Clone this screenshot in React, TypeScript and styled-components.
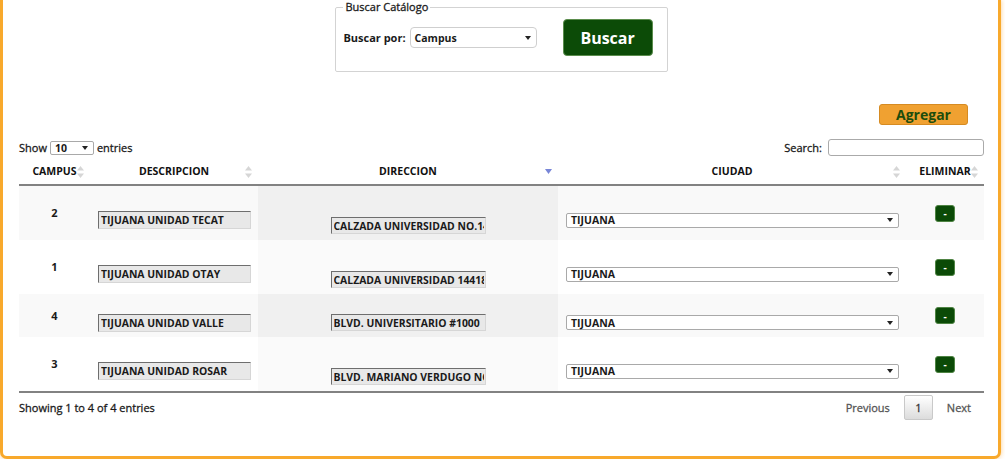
import React from "react";
import styled, { createGlobalStyle } from "styled-components";

const GlobalStyle = createGlobalStyle`
  html, body { margin: 0; padding: 0; background: #fff; }
  body { font-family: "Open Sans", "DejaVu Sans", sans-serif; color: #1a1a1a; }
  * { box-sizing: border-box; }
`;

const Frame = styled.div`
  width: 1001px;
  height: 459px;
  border: 3px solid #f8a92c;
  border-top: 0;
  border-radius: 0 0 7px 7px;
  box-shadow: 0 0 5px rgba(246, 163, 45, 0.55);
  background: #fff;
  padding: 0 14px 0 16px;
  display: flex;
  flex-direction: column;
`;

const SearchBox = styled.fieldset`
  align-self: center;
  margin: 0;
  padding: 5px 14px 15px 7px;
  border: 1px solid #d3d3d3;
  border-radius: 2px;
  display: flex;
  align-items: center;
  min-width: 0;
`;

const Legend = styled.legend`
  font-size: 11px;
  line-height: 14px;
  font-weight: 400;
  -webkit-text-stroke: 0.3px #1a1a1a;
  color: #1a1a1a;
  padding: 0 2px;
`;

const Label = styled.span<{ $bold?: boolean }>`
  font-size: 11px;
  line-height: 14px;
  font-weight: ${(p) => (p.$bold ? 700 : 400)};
  -webkit-text-stroke: ${(p) => (p.$bold ? "0" : "0.3px")} #1a1a1a;
  color: #1a1a1a;
  white-space: nowrap;
`;

const FakeSelect = styled.div<{ $w: number; $h: number; $radius?: number; $ml?: number }>`
  width: ${(p) => p.$w}px;
  height: ${(p) => p.$h}px;
  margin-left: ${(p) => p.$ml ?? 0}px;
  border: 1px solid ${(p) => ((p.$radius ?? 2) > 2 ? "#cfcfcf" : "#a9a9a9")};
  border-radius: ${(p) => p.$radius ?? 2}px;
  background: #fff;
  display: flex;
  align-items: center;
  justify-content: space-between;
  padding: 0 5px 0 4px;
  font-size: 10.5px;
  font-weight: 700;
  color: #1a1a1a;
  line-height: 12px;
`;

const CenteredSelect = styled(FakeSelect)`
  margin: 0 auto;
`;

const SearchButton = styled.button`
  width: 90px;
  height: 37px;
  margin-left: 26px;
  background: #0c4b07;
  border: 1px solid #5b8d4d;
  border-radius: 4px;
  color: #fff;
  font-family: "Open Sans", "DejaVu Sans", sans-serif;
  font-size: 16px;
  font-weight: 700;
  padding: 0;
`;

const AddButton = styled.button`
  align-self: flex-end;
  margin: 32px 16px 0 0;
  width: 89px;
  height: 21px;
  background: #f0a131;
  border: 1px solid #d68b22;
  border-radius: 3px;
  color: #1d4d0c;
  font-family: "Open Sans", "DejaVu Sans", sans-serif;
  font-size: 14px;
  font-weight: 700;
  line-height: 18px;
  padding: 0;
`;

const Toolbar = styled.div`
  margin-top: 14px;
  height: 17px;
  display: flex;
  align-items: center;
  justify-content: space-between;
`;

const Group = styled.div`
  display: flex;
  align-items: center;
`;

const Gap = styled.span<{ $w: number }>`
  width: ${(p) => p.$w}px;
  flex: none;
`;

const SearchInput = styled.input`
  width: 156px;
  height: 17px;
  margin-left: 6px;
  border: 1px solid #aaa;
  border-radius: 3px;
  background: #fff;
  padding: 0 3px;
`;

const Table = styled.table`
  margin-top: 5px;
  width: 965px;
  table-layout: fixed;
  border-collapse: separate;
  border-spacing: 0;
  border-bottom: 2px solid #828282;
`;

const HeadCell = styled.th`
  height: 25px;
  padding: 4px 6px 6px;
  border-bottom: 2px solid #828282;
  font-size: 10.5px;
  line-height: 13px;
  font-weight: 700;
  color: #111;
  text-align: center;
`;

const HeadInner = styled.div`
  display: grid;
  grid-template-columns: 1fr auto 1fr;
  align-items: center;
`;

const HeadTitle = styled.span`
  grid-column: 2;
`;

const IconSlot = styled.span`
  grid-column: 3;
  justify-self: end;
  display: flex;
  align-items: center;
`;

const Row = styled.tr<{ $odd: boolean }>`
  background: ${(p) => (p.$odd ? "#f9f9f9" : "#fff")};
  & + & > td { border-top: 1px solid #dddddd; }
`;

const Cell = styled.td<{ $shift?: boolean; $sorted?: boolean; $odd?: boolean }>`
  padding: ${(p) => (p.$shift ? "14px 8px 0" : "6px 8px")};
  text-align: center;
  vertical-align: middle;
  font-size: 11px;
  line-height: 14px;
  font-weight: 700;
  color: #1a1a1a;
  background: ${(p) => (p.$sorted ? (p.$odd ? "#f0f0f0" : "#fafafa") : "transparent")};
`;

const TextInput = styled.input<{ $w: number; $h: number; $mt?: number }>`
  display: block;
  width: ${(p) => p.$w}px;
  height: ${(p) => p.$h}px;
  margin: ${(p) => p.$mt ?? 0}px auto 0;
  padding: 0 1px 0 2px;
  background: #e8e8e8;
  border: 1px solid;
  border-color: #6e6e6e #d6d6d6 #d6d6d6 #6e6e6e;
  font-family: "Open Sans", "DejaVu Sans", sans-serif;
  font-size: 10.4px;
  font-weight: 700;
  color: #1a1a1a;
  outline: none;
`;

const RemoveButton = styled.button`
  width: 20px;
  height: 17px;
  margin: 0 auto;
  display: flex;
  align-items: center;
  justify-content: center;
  background: #0b4a07;
  border: 1px solid #4f8444;
  border-radius: 3px;
  color: #fff;
  font-family: "Open Sans", "DejaVu Sans", sans-serif;
  font-size: 10px;
  font-weight: 700;
  line-height: 10px;
  padding: 0;
`;

const Footer = styled.div`
  margin-top: 2px;
  display: flex;
  align-items: center;
  justify-content: space-between;
`;

const Pager = styled.div`
  display: flex;
  align-items: center;
  gap: 14px;
  padding-right: 13px;
`;

const PageLink = styled.span`
  font-size: 11px;
  line-height: 14px;
  font-weight: 400;
  -webkit-text-stroke: 0.3px #555;
  color: #555;
`;

const PageButton = styled.span`
  width: 29px;
  height: 25px;
  display: flex;
  align-items: center;
  justify-content: center;
  border: 1px solid #c9c9c9;
  border-radius: 2px;
  background: linear-gradient(#ffffff, #dcdcdc);
  font-size: 11px;
  font-weight: 400;
  -webkit-text-stroke: 0.3px #333;
  color: #333;
`;

const Caret = () => (
  <svg width="6" height="4" viewBox="0 0 6 4">
    <polygon points="0,0 6,0 3,4" fill="#222" />
  </svg>
);

const SortBoth = () => (
  <svg width="7" height="12" viewBox="0 0 7 12">
    <polygon points="3.5,0 7,4.5 0,4.5" fill="#d6d6d6" />
    <polygon points="0,7.5 7,7.5 3.5,12" fill="#d6d6d6" />
  </svg>
);

const SortDesc = () => (
  <svg width="7" height="5" viewBox="0 0 7 5">
    <polygon points="0,0 7,0 3.5,5" fill="#7886d7" />
  </svg>
);

const columns = [
  { title: "CAMPUS", width: 71, sorted: false },
  { title: "DESCRIPCION", width: 168, sorted: false },
  { title: "DIRECCION", width: 300, sorted: true },
  { title: "CIUDAD", width: 348, sorted: false },
  { title: "ELIMINAR", width: 78, sorted: false },
];

const rows = [
  { id: "2", desc: "TIJUANA UNIDAD TECAT", dir: "CALZADA UNIVERSIDAD NO.14418", tall: true },
  { id: "1", desc: "TIJUANA UNIDAD OTAY", dir: "CALZADA UNIVERSIDAD 14418", tall: true },
  { id: "4", desc: "TIJUANA UNIDAD VALLE", dir: "BLVD. UNIVERSITARIO #1000", tall: false },
  { id: "3", desc: "TIJUANA UNIDAD ROSAR", dir: "BLVD. MARIANO VERDUGO NO. 58", tall: true },
];

export default function App() {
  return (
    <>
      <GlobalStyle />
      <Frame>
        <SearchBox>
          <Legend>Buscar Catálogo</Legend>
          <Label $bold>Buscar por:</Label>
          <FakeSelect $w={127} $h={21} $radius={4} $ml={4}>
            <span>Campus</span>
            <Caret />
          </FakeSelect>
          <SearchButton>Buscar</SearchButton>
        </SearchBox>

        <AddButton>Agregar</AddButton>

        <Toolbar>
          <Group>
            <Label>Show</Label>
            <Gap $w={3} />
            <FakeSelect $w={44} $h={14}>
              <span>10</span>
              <Caret />
            </FakeSelect>
            <Gap $w={3} />
            <Label>entries</Label>
          </Group>
          <Group>
            <Label>Search:</Label>
            <SearchInput />
          </Group>
        </Toolbar>

        <Table>
          <colgroup>
            {columns.map((c) => (
              <col key={c.title} style={{ width: c.width }} />
            ))}
          </colgroup>
          <thead>
            <tr>
              {columns.map((c) => (
                <HeadCell key={c.title}>
                  <HeadInner>
                    <HeadTitle>{c.title}</HeadTitle>
                    <IconSlot>{c.sorted ? <SortDesc /> : <SortBoth />}</IconSlot>
                  </HeadInner>
                </HeadCell>
              ))}
            </tr>
          </thead>
          <tbody>
            {rows.map((r, i) => {
              const odd = i % 2 === 0;
              return (
                <Row key={r.id} $odd={odd}>
                  <Cell>{r.id}</Cell>
                  <Cell $shift>
                    <TextInput $w={153} $h={18} readOnly value={r.desc} />
                  </Cell>
                  <Cell $sorted $odd={odd}>
                    <TextInput $w={155} $h={17} $mt={r.tall ? 25 : 14} readOnly value={r.dir} />
                  </Cell>
                  <Cell $shift>
                    <CenteredSelect $w={333} $h={15}>
                      <span>TIJUANA</span>
                      <Caret />
                    </CenteredSelect>
                  </Cell>
                  <Cell>
                    <RemoveButton>-</RemoveButton>
                  </Cell>
                </Row>
              );
            })}
          </tbody>
        </Table>

        <Footer>
          <Label>Showing 1 to 4 of 4 entries</Label>
          <Pager>
            <PageLink>Previous</PageLink>
            <PageButton>1</PageButton>
            <PageLink>Next</PageLink>
          </Pager>
        </Footer>
      </Frame>
    </>
  );
}
